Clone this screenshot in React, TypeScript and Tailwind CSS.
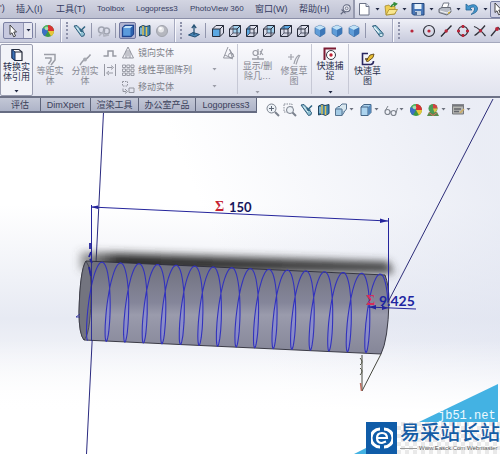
import type { ReactNode } from "react";

const menus = [
  { label: "插入(I)", size: "text-[9px] w-[40px]" },
  { label: "工具(T)", size: "text-[9px] w-[41px]" },
  { label: "Toolbox", size: "text-[8px] w-[39px]" },
  { label: "Logopress3", size: "text-[8px] w-[54px]" },
  { label: "PhotoView 360", size: "text-[8px] w-[65px]" },
  { label: "窗口(W)", size: "text-[9px] w-[44px]" },
  { label: "帮助(H)", size: "text-[9px] w-[40px]" },
];

const tabs = [
  { label: "评估", width: "w-[41px]" },
  { label: "DimXpert", width: "w-[50px]" },
  { label: "渲染工具", width: "w-[48px]" },
  { label: "办公室产品", width: "w-[57px]" },
  { label: "Logopress3", width: "w-[61px]" },
];

// Helix projected on the cylinder, one turn every PITCH pixels
const PITCH = 18.55;
const helixPoint = (a: number) => {
  const x = 99.5 + (PITCH * a) / (2 * Math.PI) + 6 * Math.sin(a) + 2.5 * Math.cos(a);
  const y = 301.5 + (x - 99.5) * 0.043 - 39.5 * Math.cos(a);
  return `${x.toFixed(1)},${y.toFixed(1)}`;
};
const helixPart = (from: number, to: number) => {
  const steps = Math.ceil((to - from) / 0.15);
  return Array.from({ length: steps + 1 }, (_, i) => helixPoint(from + ((to - from) * i) / steps)).join(" ");
};

function Icon({ children, className = "w-[14px] h-[14px]" }: { children: ReactNode; className?: string }) {
  return (
    <svg viewBox="0 0 14 14" className={`shrink-0 ${className}`} fill="none" aria-hidden="true">
      {children}
    </svg>
  );
}

function Caret({ color = "#222a44" }: { color?: string }) {
  return (
    <svg viewBox="0 0 5 3" className="w-[5px] h-[3px] shrink-0" aria-hidden="true">
      <path d="M0.5 0H4.5L2.5 2.6Z" fill={color} />
    </svg>
  );
}

function Tool({ label, children, className = "" }: { label: string; children: ReactNode; className?: string }) {
  return (
    <button aria-label={label} className={`w-[17px] h-[17px] shrink-0 flex items-center justify-center ${className}`}>
      {children}
    </button>
  );
}

function Sep() {
  return <span className="w-px h-[15px] mx-[3px] bg-[#9296ad] shrink-0" />;
}

function Grip() {
  return <span className="w-[2px] h-[17px] ml-1 mr-[3px] shrink-0 border-l-2 border-dotted border-[#8e92aa]" />;
}

function Ball() {
  return (
    <Icon>
      <circle cx="7" cy="7" r="6" fill="#3a9a45" />
      <path d="M7 7V1A6 6 0 0 1 13 7Z" fill="#d93232" />
      <path d="M7 7H13A6 6 0 0 1 10 12.200Z" fill="#e8c63a" />
      <path d="M7 7L2 3.700A6 6 0 0 0 4 12.200Z" fill="#3c6ec4" />
      <path d="M7 7L2 3.700A6 6 0 0 1 7 1Z" fill="#55b865" />
      <circle cx="5.500" cy="4.500" r="1.800" fill="#fff" opacity="0.5" />
    </Icon>
  );
}

function Torch() {
  return (
    <Icon>
      <path d="M1.500 2L5 1.500L12 9.500Q12.500 12.500 9 12.500Z" fill="#83b9cd" stroke="#2b5a78" />
      <path d="M3 3L8 8.500" stroke="#e6f6fb" strokeWidth="1.500" />
      <ellipse cx="10.200" cy="11" rx="2" ry="1.500" fill="#d4eff6" stroke="#2b5a78" strokeWidth="0.700" />
    </Icon>
  );
}

function PrevView() {
  return (
    <Icon>
      <path d="M1 2L4 1.500L11.500 9.500Q12 12.500 8.500 12.500Z" fill="#8fc0d2" stroke="#315e7c" />
      <path d="M8 6.500L12 2.500M7 4.500L7.500 7.500L10.500 7" stroke="#2f6582" strokeWidth="1.500" />
      <path d="M3.500 3.500L8 9" stroke="#e9f8fc" />
    </Icon>
  );
}

function Section() {
  return (
    <Icon>
      <path d="M1.500 3L5 1.500L8 2.500L12 1.500V10.500L8.500 12.500L5 11L1.500 12Z" fill="#3a83b5" stroke="#23445c" />
      <path d="M5 2V11M8.500 3V12" stroke="#e2c353" strokeWidth="1.500" />
      <path d="M3 4V10" stroke="#b9e1ee" />
    </Icon>
  );
}

function Cube({ face = "none", solid = false }: { face?: "front" | "left" | "top" | "back" | "none"; solid?: boolean }) {
  if (solid) {
    return (
      <Icon>
        <path d="M1.500 4L4 1.500H12.500V10L10 12.500H1.500Z" fill="#5b9bdc" stroke="#1f4590" strokeWidth="1.300" />
        <path d="M2 4L4.500 2H12L9.500 4Z" fill="#c4e2f8" />
        <path d="M9.500 4L12 2V10L9.500 12Z" fill="#2c62ad" />
      </Icon>
    );
  }
  return (
    <Icon>
      {face === "front" && <path d="M1.500 5H9V12.500H1.500Z" fill="#5ba8e2" />}
      {face === "left" && <path d="M1.500 5L5 1.500V9L1.500 12.500Z" fill="#5ba8e2" />}
      {face === "top" && <path d="M1.500 5L5 1.500H12.500L9 5Z" fill="#5ba8e2" />}
      {face === "back" && <path d="M5 1.500H12.500V9H5Z" fill="#a4d2ee" />}
      <path d="M1.500 5H9V12.500H1.500ZM1.500 5L5 1.500H12.500L9 5M12.500 1.500V9L9 12.500" stroke="#272c3a" />
      {face !== "front" && <path d="M5 1.500V9H12.500M5 9L1.500 12.500" stroke="#3c4356" strokeWidth="0.800" />}
    </Icon>
  );
}

function IsoCube() {
  return (
    <Icon>
      <path d="M7 1.200L12 3.500V9.500L7 12.800L2 9.500V3.500Z" fill="#5f9cd8" stroke="#416f9f" strokeWidth="0.700" />
      <path d="M7 1.200L12 3.500L7 6L2 3.500Z" fill="#c2e2f6" />
      <path d="M7 6L12 3.500V9.500L7 12.800Z" fill="#3d77b8" />
    </Icon>
  );
}

function Pointer() {
  return (
    <Icon>
      <path d="M4 1L10.500 8H7.800L9.500 12L7.700 12.800L6 8.800L4 10.500Z" fill="#fff" stroke="#333" strokeWidth="0.900" />
    </Icon>
  );
}

function QuickTools() {
  const drop = "w-[6px] shrink-0 flex justify-center";
  return (
    <div className="flex-1 min-w-0 overflow-hidden h-full flex items-center gap-[2px]">
      <Tool label="新建">
        <Icon><path d="M2.500 1.500H9L12 4.500V13H2.500Z" fill="#fff" stroke="#6c7386" /><path d="M9 1.500V4.500H12" fill="#dfe5f2" stroke="#6c7386" /></Icon>
      </Tool>
      <span className={drop}><Caret /></span>
      <Tool label="打开">
        <Icon><path d="M1 4L5 3L6 4.500H11V12L2 13Z" fill="#efcf55" stroke="#a48a2c" strokeWidth="0.800" /><path d="M2 13L5 7.500H13.500L10.500 12Z" fill="#f8e68e" stroke="#a48a2c" strokeWidth="0.800" /><path d="M7 5Q8 2 11 2M9.500 0.500L12.500 2L10 4" stroke="#348d3c" strokeWidth="1.500" /></Icon>
      </Tool>
      <span className={drop}><Caret /></span>
      <Tool label="保存">
        <Icon><path d="M1 1.500H13V13H2.500L1 11.500Z" fill="#4777b8" stroke="#27497d" /><path d="M3.500 2H10.500V7H3.500Z" fill="#e7f2fa" /><path d="M4 9H10V13H4Z" fill="#c0cfdf" /><path d="M5 10V13" stroke="#27497d" strokeWidth="1.500" /></Icon>
      </Tool>
      <span className={drop}><Caret /></span>
      <Tool label="打印">
        <Icon><path d="M3.500 6L5.500 1H11L9.500 6" fill="#fff" stroke="#737985" /><path d="M1 7L4 5.500H12.500L13 10L9 13L1 10.500Z" fill="#b6bbc5" stroke="#686d78" /><path d="M2 9L9 11L12.500 8.500" stroke="#f5f6f8" /><path d="M10 11.500L12 10" stroke="#cfad2c" strokeWidth="1.500" /></Icon>
      </Tool>
      <span className={drop}><Caret /></span>
      <Tool label="撤消">
        <Icon><path d="M1 2V8H7L5 6Q9.500 3.500 9.700 7Q9.500 10 6 12.500Q13 10.500 12.500 6Q11 0.500 3.500 4Z" fill="#4598cf" stroke="#256594" strokeWidth="0.800" /></Icon>
      </Tool>
      <span className={drop}><Caret /></span>
      <button aria-label="选择" className="w-[28px] h-[17px] shrink-0 rounded-[2px] border border-[#7880a4] bg-[#cfd1e4]">
        <Pointer />
      </button>
    </div>
  );
}

function MenuBar() {
  return (
    <div className="h-[19px] flex bg-gradient-to-b from-[#eceef6] to-[#cdd0e0] border-b border-[#8b8fa8]">
      <nav className="w-[355px] shrink-0 h-full flex items-center border-r-2 border-[#969aaf] bg-gradient-to-b from-[#d3d5e2] to-[#bdc0d2] text-[#343b61]">
        <span className="w-4 text-[9px]">')</span>
        {menus.map((m) => (
          <button key={m.label} className={`${m.size} shrink-0 text-left whitespace-nowrap leading-4`}>
            {m.label}
          </button>
        ))}
        <button aria-label="固定菜单" className="pl-px">
          <Icon className="w-[11px] h-[11px]">
            <circle cx="8.500" cy="5.500" r="4.500" fill="#e6e7ef" stroke="#62687f" strokeWidth="1.300" />
            <circle cx="8.500" cy="5.500" r="1.800" stroke="#62687f" />
            <path d="M1 13L5 9M2 7L7 12" stroke="#62687f" strokeWidth="1.500" />
          </Icon>
        </button>
      </nav>
      <QuickTools />
    </div>
  );
}

function ViewBar() {
  const panel = "h-full shrink-0 flex items-center border-r border-[#f8f8fc] shadow-[inset_-1px_0_0_#a6aac0]";
  return (
    <div className="h-[24px] flex overflow-hidden bg-gradient-to-b from-[#eff0f7] to-[#c8cbdd] border-b border-[#a4a8bd]">
      <div className={`${panel} w-[62px] pl-[3px]`}>
        <button aria-label="选择" className="w-[30px] h-[17px] shrink-0 flex items-center rounded-[2px] border border-[#7c81a4] bg-[#c7c9df]">
          <span className="w-[20px] pl-[2px]"><Pointer /></span>
          <span className="h-full w-[9px] flex items-center justify-center border-l border-[#9296b1] bg-[#e7e8f1]"><Caret /></span>
        </button>
        <span className="w-px h-[15px] mx-[2px] bg-[#9296ad]" />
        <Tool label="编辑外观" className="ml-px"><Ball /></Tool>
      </div>
      <div className={`${panel} w-[114px]`}>
        <Grip />
        <Tool label="上一视图"><PrevView /></Tool>
        <Sep />
        <Tool label="重建">
          <Icon><circle cx="4.500" cy="6" r="3" stroke="#a0a4b1" strokeWidth="1.500" /><circle cx="9.500" cy="7" r="3" stroke="#a0a4b1" strokeWidth="1.500" /><path d="M2 12L6 8L7 12L12 11" stroke="#b1b4c0" strokeWidth="1.500" /></Icon>
        </Tool>
        <Sep />
        <Tool label="带边线上色" className="rounded-[2px] border border-[#72789f] bg-[#b1b4d2]"><Cube solid /></Tool>
        <Tool label="剖面视图"><Section /></Tool>
        <Tool label="阴影">
          <Icon><circle cx="7" cy="7" r="5.500" fill="#b5b7bf" stroke="#a1a4ad" /><circle cx="6" cy="5.500" r="3" fill="#e6e7ea" /><circle cx="5.500" cy="4.500" r="1.300" fill="#fff" /></Icon>
        </Tool>
      </div>
      <div className={`${panel} w-[218px]`}>
        <Grip />
        <Tool label="正视于">
          <Icon><path d="M1.500 11L6 8.500L12.500 10.500L8 13Z" fill="#4784b5" stroke="#234f74" /><path d="M7 11V2M4.800 4.200L7 1L9.200 4.200" stroke="#275477" strokeWidth="1.300" /></Icon>
        </Tool>
        <Sep />
        <Tool label="前视"><Cube face="front" /></Tool>
        <Tool label="后视"><Cube face="back" /></Tool>
        <Tool label="左视"><Cube face="left" /></Tool>
        <Tool label="右视"><Cube face="back" /></Tool>
        <Tool label="上视"><Cube face="top" /></Tool>
        <Tool label="下视"><Cube /></Tool>
        <Tool label="等轴测"><IsoCube /></Tool>
        <Tool label="左右二等角"><IsoCube /></Tool>
        <Tool label="上下二等角"><IsoCube /></Tool>
        <Sep />
        <Tool label="视图定向"><Torch /></Tool>
      </div>
      <div className="flex-1 min-w-0 h-full flex items-center">
        <Grip />
        <Tool label="点"><Icon><circle cx="7" cy="7" r="1.600" fill="#b8263b" /></Icon></Tool>
        <Tool label="圆心"><Icon><circle cx="7" cy="7" r="5.500" stroke="#2f313c" strokeWidth="1.200" /><circle cx="7" cy="7" r="1.600" fill="#b8263b" /></Icon></Tool>
        <Tool label="直线"><Icon><path d="M2 12.500L12.500 1.500" stroke="#25272f" strokeWidth="1.300" /><circle cx="7.200" cy="7" r="1.700" fill="#b8263b" /></Icon></Tool>
        <Tool label="象限点"><Icon><circle cx="7" cy="7" r="4.700" stroke="#33343d" strokeWidth="1.200" /><path d="M7 1V4M7 10V13M1 7H4M10 7H13" stroke="#b8263b" strokeWidth="2.500" /></Icon></Tool>
        <Tool label="交叉点"><Icon><path d="M1 2.500Q6 4 12.500 12M1.500 11.500Q6 9 12 1.500" stroke="#33343d" strokeWidth="1.300" /><circle cx="7.500" cy="6.700" r="1.700" fill="#b8263b" /></Icon></Tool>
        <Tool label="最近点"><Icon><path d="M1 12L8 3.500L13 8" stroke="#33343d" strokeWidth="1.300" /><circle cx="7" cy="5" r="1.900" fill="#b8263b" /></Icon></Tool>
      </div>
    </div>
  );
}

function BigButton({ icon, lines, width, off = false, caret = false, className = "" }: {
  icon: ReactNode; lines: string[]; width: string; off?: boolean; caret?: boolean; className?: string;
}) {
  return (
    <button className={`${width} ${className} h-[52px] shrink-0 flex flex-col items-center text-[9px] leading-[10px] whitespace-nowrap ${off ? "text-[#858791]" : "text-[#29304d]"}`}>
      {icon}
      {lines.map((line) => <span key={line}>{line}</span>)}
      {caret && <span className="mt-auto mb-[2px] flex"><Caret color={off ? "#9a9ca6" : "#222a44"} /></span>}
    </button>
  );
}

function SmallButton({ icon, label, caret = false }: { icon: ReactNode; label: string; caret?: boolean }) {
  return (
    <button className="h-[17px] flex items-center gap-[3px] text-[9px] leading-[10px] text-[#7b7d88]">
      {icon}
      <span className="w-[71px] text-left">{label}</span>
      {caret && <Caret color="#9a9ca6" />}
    </button>
  );
}

function Ribbon() {
  const line = "w-px h-[50px] bg-[#c6c8d5] shrink-0";
  return (
    <div className="h-[55px] flex overflow-hidden pt-px bg-gradient-to-b from-[#fafafd] to-[#e1e3ee] border-b-2 border-[#6d7286]">
      <BigButton
        width="w-[33px]" lines={["转换实", "体引用"]} caret
        className="pt-[3px] rounded-[2px] border border-[#9a9db0] bg-[#f2f3f8]"
        icon={<Icon><path d="M2 1.500H9L12 4V12.500H5L2 10Z" fill="#f8f9fb" stroke="#252b3b" strokeWidth="1.200" /><path d="M2 1.500L5 4V12.500L2 10Z" fill="#3a72b7" stroke="#1e355e" /><path d="M5 4H12" stroke="#252b3b" /></Icon>}
      />
      <BigButton
        width="w-[34px]" lines={["等距实", "体"]} off className="pt-[8px]"
        icon={<Icon><path d="M1 2.500H12V8L8 13M2 6H8V8.500L5.500 12" stroke="#9c9ea7" strokeWidth="1.500" /></Icon>}
      />
      <BigButton
        width="w-[36px]" lines={["分割实", "体"]} off className="pt-[8px]"
        icon={<Icon><path d="M2 13Q5 8 7 7.500T12.500 2.500" stroke="#9c9ea7" strokeWidth="1.500" /><circle cx="7" cy="7.500" r="2" fill="#a8aab2" /></Icon>}
      />
      <div className="w-[18px] shrink-0 pt-[2px] flex flex-col gap-[3px]">
        <button aria-label="剪裁"><Icon><path d="M0.500 10H5V5H10V10H13.500" stroke="#9799a3" strokeWidth="1.500" /></Icon></button>
        <button aria-label="间距"><Icon><path d="M1.500 1V13M12.500 1V13M4 4.500H9M8 2.500L10.500 4.500L8 6.500M10 10H5M6 8L3.500 10L6 12" stroke="#9799a3" /></Icon></button>
      </div>
      <div className="w-[101px] shrink-0">
        <SmallButton
          label="镜向实体"
          icon={<Icon><path d="M7 4V10.500M7 1L1.500 12H12.500ZM5 4.800V12M9 4.800V12" stroke="#92949e" /></Icon>}
        />
        <SmallButton
          label="线性草图阵列" caret
          icon={<Icon><path d="M1.500 2H4.500V4.500H1.500ZM5.800 2H8.800V4.500H5.800ZM10 2H13V4.500H10ZM1.500 6H4.500V8.500H1.500ZM5.800 6H8.800V8.500H5.800ZM10 6H13V8.500H10ZM1.500 10H4.500V12.500H1.500ZM5.800 10H8.800V12.500H5.800ZM10 10H13V12.500H10Z" stroke="#92949e" strokeWidth="0.900" /></Icon>}
        />
        <SmallButton
          label="移动实体" caret
          icon={<Icon><path d="M1.500 1.500H6.500V6H1.500Z" stroke="#92949e" strokeDasharray="1.500 1" /><path d="M8 8H13V12.500H8ZM2 8.500V11.500H5M4 9L6.500 11.500L4 13.500" stroke="#92949e" /></Icon>}
        />
      </div>
      <div className="w-[15px] shrink-0">
        <button aria-label="添加几何关系" className="flex pt-[2px]"><Icon><path d="M6 1L1.500 12H10.500L7.500 3M3 9L11 13M8 4L12 11" stroke="#9698a2" /><circle cx="9" cy="9.500" r="2.500" stroke="#9698a2" /></Icon></button>
      </div>
      <span className={line} />
      <BigButton
        width="w-[39px]" lines={["显示/删", "除几…"]} off caret className="pt-[3px]"
        icon={<Icon><path d="M1 12H13M7 12V9" stroke="#9c9ea7" strokeWidth="1.500" /><circle cx="4.500" cy="6" r="2.500" stroke="#9c9ea7" strokeWidth="1.200" /><path d="M7 8V2M9 8L11.500 2M9 4L12 8" stroke="#9c9ea7" strokeWidth="1.200" /></Icon>}
      />
      <BigButton
        width="w-[34px]" lines={["修复草", "图"]} off className="pt-[8px]"
        icon={<Icon><path d="M1 5H7M4 2V8M7 12Q8 6 12 3M9 12.500Q11 6 13 3" stroke="#a0a2ab" strokeWidth="1.200" /></Icon>}
      />
      <span className={line} />
      <BigButton
        width="w-[36px]" lines={["快速捕", "捉"]} caret className="pt-[3px]"
        icon={<Icon><path d="M1.500 13V1.500H13" stroke="#7c1b32" strokeWidth="2" /><circle cx="8" cy="8" r="4.500" fill="#fff" stroke="#333844" /><circle cx="8" cy="8" r="1.700" fill="#c02235" /></Icon>}
      />
      <span className={line} />
      <BigButton
        width="w-[37px]" lines={["快速草", "图"]} className="pt-[8px]"
        icon={<Icon><path d="M7 1.500H1.500V12.500H10Q12.500 12 12.500 9" stroke="#292760" strokeWidth="1.600" /><path d="M5 9L9 3L13 2L12 5.500L7 9.500Z" fill="#e8be33" stroke="#5d4517" strokeWidth="0.900" /><path d="M4 7L7 7" stroke="#5d4517" strokeWidth="1.500" /></Icon>}
      />
    </div>
  );
}

function ViewTools() {
  const drop = "h-[17px] w-[8px] flex items-center";
  return (
    <div className="flex items-start pt-[3px] pl-[7px]">
      <Tool label="整屏显示全图"><Icon><circle cx="5.500" cy="5.500" r="4.500" fill="#edf2f7" stroke="#7b828e" /><path d="M9 9L13 13" stroke="#7b828e" strokeWidth="2" /><path d="M3 5.500H8M5.500 3V8" stroke="#5d6675" /></Icon></Tool>
      <Tool label="局部放大"><Icon><path d="M1 1H9V9H1Z" stroke="#878c96" strokeDasharray="1.500 1" /><circle cx="7" cy="7" r="3.500" fill="#edf2f7" stroke="#7b828e" /><path d="M9.500 9.500L13 13" stroke="#7b828e" strokeWidth="2" /></Icon></Tool>
      <Tool label="上一视图"><PrevView /></Tool>
      <Tool label="剖面视图"><Section /></Tool>
      <Tool label="视图定向"><Icon><path d="M1.500 6L4 3.500H10V9.500L8 12.500H1.500Z" fill="#a4cbe5" stroke="#56738f" /><path d="M5 4L8 1H12.500V6L10 9" fill="#d8e7ef" stroke="#56738f" /><path d="M1.500 6H8V12.500" stroke="#56738f" /></Icon></Tool>
      <span className={drop}><Caret color="#6c717e" /></span>
      <Tool label="显示样式"><Icon><path d="M2 4L5 1.500H12V9.500L9 12.500H2Z" fill="#acd4ef" stroke="#446586" /><path d="M2 4H9V12.500" stroke="#446586" /><path d="M9 4L12 1.500V9.500L9 12.500Z" fill="#5688b9" /></Icon></Tool>
      <span className={drop}><Caret color="#6c717e" /></span>
      <Tool label="隐藏/显示项目"><Icon><circle cx="3.500" cy="9" r="2.500" stroke="#7f858e" strokeWidth="1.200" /><circle cx="9.500" cy="10" r="2.500" stroke="#7f858e" strokeWidth="1.200" /><path d="M1 8L4 3M6 9H7M12 10L13.500 5" stroke="#7f858e" /></Icon></Tool>
      <span className={drop}><Caret color="#6c717e" /></span>
      <Tool label="编辑外观"><Ball /></Tool>
      <Tool label="应用布景"><Icon><path d="M1 13L3 9H11L13 13Z" fill="#5a8b4c" /><circle cx="7" cy="5.500" r="4.500" fill="#4b9b57" /><path d="M7 5.500V1A4.500 4.500 0 0 1 11.500 5.500Z" fill="#d34343" /><path d="M7 5.500H11.500Q10.500 9 8.500 9.500Z" fill="#e0c247" /><path d="M3 9.500L7 12.500L11 9.500" stroke="#e0705f" /></Icon></Tool>
      <span className={drop}><Caret color="#6c717e" /></span>
      <Tool label="视图设定"><Icon><path d="M1.500 3H12.500V11H1.500Z" fill="#b5b6b2" stroke="#75777b" /><path d="M1 2H13M3 6H10M3 8.500H8" stroke="#64666b" strokeWidth="1.300" /><path d="M9 10L13 6" stroke="#cfad63" strokeWidth="1.500" /></Icon></Tool>
      <span className={drop}><Caret color="#6c717e" /></span>
    </div>
  );
}

function Model() {
  return (
    <svg viewBox="0 98 500 356" className="block w-full h-auto" role="img" aria-label="螺旋线模型">
      <defs>
        <linearGradient id="sky" x1="0" y1="0" x2="0" y2="1">
          <stop offset="0.3" stopColor="#ffffff" />
          <stop offset="0.62" stopColor="#e7eaf3" />
          <stop offset="0.86" stopColor="#fdfdfe" />
        </linearGradient>
        <linearGradient id="side" x1="0" y1="0.6" x2="1" y2="0.3">
          <stop offset="0.45" stopColor="#dfe3f0" stopOpacity="0" />
          <stop offset="1" stopColor="#dfe3f0" stopOpacity="0.65" />
        </linearGradient>
        <linearGradient id="floor" x1="0" y1="0" x2="0" y2="1">
          <stop offset="0.68" stopColor="#ffffff" stopOpacity="0" />
          <stop offset="0.88" stopColor="#ffffff" />
        </linearGradient>
        <linearGradient id="body" x1="0" y1="0" x2="0" y2="1">
          <stop offset="0" stopColor="#6e6f7b" />
          <stop offset="0.45" stopColor="#85869a" />
          <stop offset="0.58" stopColor="#9a9bac" />
          <stop offset="1" stopColor="#858698" />
        </linearGradient>
        <linearGradient id="shade" x1="0" y1="0" x2="1" y2="0">
          <stop offset="0" stopColor="#555" stopOpacity="0.5" />
          <stop offset="0.12" stopColor="#2a2a2a" />
          <stop offset="1" stopColor="#3a3a3a" />
        </linearGradient>
        <filter id="blur" x="-10%" y="-60%" width="120%" height="220%">
          <feGaussianBlur stdDeviation="4" />
        </filter>
      </defs>
      <rect y="98" width="500" height="356" fill="url(#sky)" />
      <rect y="98" width="500" height="356" fill="url(#side)" />
      <rect y="98" width="500" height="356" fill="url(#floor)" />

      <path d="M103.500 112L86.500 454" stroke="#2a2a80" />
      <path d="M80 252L388 262L394 273L80 270Z" fill="url(#shade)" filter="url(#blur)" />

      <path d="M86 261L385 275Q389 285 389 302Q388 340 381 354L84 340Q79 334 79 312Q80 270 86 261Z" fill="url(#body)" stroke="#2c2d38" strokeWidth="0.900" />
      <path d="M86 261Q92 268 91 300Q90 335 84 340Q79 334 79 312Q80 270 86 261Z" fill="#73747f" stroke="#33343f" strokeWidth="0.700" />
      {Array.from({ length: 15 }, (_, i) => (
        <polygon key={i} points={helixPart(i * 2 * Math.PI + 1.3, (i + 1) * 2 * Math.PI - 1.3)} fill="#8588dc" opacity="0.6" />
      ))}
      <polyline points={helixPart(-Math.PI, 30 * Math.PI + 1.3)} fill="none" stroke="#3232bd" strokeWidth="1.100" />
      <path d="M91.500 262V341" stroke="#262692" strokeWidth="0.900" />

      {/* dimension lines */}
      <g stroke="#25259c" fill="none">
        <path d="M91.500 205V262M91 207L388 221M388.500 218V302" />
        <path d="M493 99L388 302" stroke="#2d2d79" />
        <path d="M368 307L416 309" />
        <path d="M90 243V249M91 252L89 257M90 259L92 263M89 267L91 276" strokeWidth="1.800" />
        <path d="M80 314L76 317H80" strokeWidth="0.800" />
      </g>
      <path d="M91 207L98 205.500V209ZM388 221L380 218.500V223ZM369 307L376 305V309.500ZM388 308L382 305.500V310Z" fill="#25259c" />
      <path d="M381 354L362 391V355" fill="none" stroke="#47483f" />
      <path d="M360 358Q364 362 360 365M360 368Q364 371 360 375" fill="none" stroke="#505344" />
      <path d="M360.500 383L361.500 391" stroke="#bc6b5d" strokeWidth="1.500" />
      <g fontFamily="'Liberation Serif', serif" fontWeight="bold" fontSize="14" fill="#c72232">
        <text x="215" y="211">Σ</text>
        <text x="366" y="305" fill="#d52c59">Σ</text>
      </g>
      <g fontFamily="Lato, sans-serif" fontWeight="bold" fontSize="13" fill="#16165c">
        <text x="229" y="212">150</text>
        <text x="379" y="306" fill="#1e25a1" fontSize="14">9.425</text>
      </g>

      <path d="M498 384V454H354L366 448L421 421Z" fill="#43b2e3" />
      <text x="438" y="419" fontFamily="'Liberation Mono', monospace" fontSize="12" fill="#eefaff">jb51.net</text>
    </svg>
  );
}

function Watermark() {
  return (
    <div className="absolute right-0 bottom-0 h-[32px] flex">
      <div className="w-[31px] bg-[#0f5ca8] flex items-center justify-center">
        <svg viewBox="0 0 22 22" className="w-[22px] h-[22px]" fill="none" aria-hidden="true">
          <path d="M9 2A9 9 0 0 0 9 20M13 2A9 9 0 0 1 13 20" stroke="#fff" strokeWidth="3" />
          <path d="M6 11H16Q16 6 11 6T6 11Q6 16 11 16L15 14.500" stroke="#fff" strokeWidth="2.200" />
          <path d="M11 0V5M11 17V22" stroke="#0f5ca8" strokeWidth="2" />
        </svg>
      </div>
      <div className="w-[103px] pl-[3px] overflow-hidden bg-[#f7f7f7] bg-[repeating-conic-gradient(#e9e9e9_0_25%,#fdfdfd_0_50%)] bg-[length:8px_8px]">
        <p className="h-[22px] text-[20px] leading-[22px] font-medium text-[#145ca5] whitespace-nowrap">易采站长站</p>
        <p className="flex items-center gap-[2px] text-[6px] leading-[8px] text-[#555] whitespace-nowrap">
          <span className="w-[17px] h-px bg-[#999]" />
          Www.Easck.Com Webmaster
        </p>
      </div>
    </div>
  );
}

export default function App() {
  return (
    <div className="w-full overflow-hidden bg-white font-['Liberation_Sans','Noto_Sans_CJK_SC',sans-serif]">
      <MenuBar />
      <ViewBar />
      <Ribbon />
      <main className="relative">
        <Model />
        <div className="absolute inset-x-0 top-0 flex items-start">
          <nav className="flex shrink-0 h-[15px] border-b-2 border-[#666c82]">
            {tabs.map((tab) => (
              <button key={tab.label} className={`${tab.width} border-r border-[#5f657b] bg-gradient-to-b from-[#c3c7d6] to-[#aeb4c8] text-[9px] leading-[12px] text-[#3a405a] whitespace-nowrap`}>
                {tab.label}
              </button>
            ))}
          </nav>
          <ViewTools />
        </div>
        <Watermark />
      </main>
    </div>
  );
}
